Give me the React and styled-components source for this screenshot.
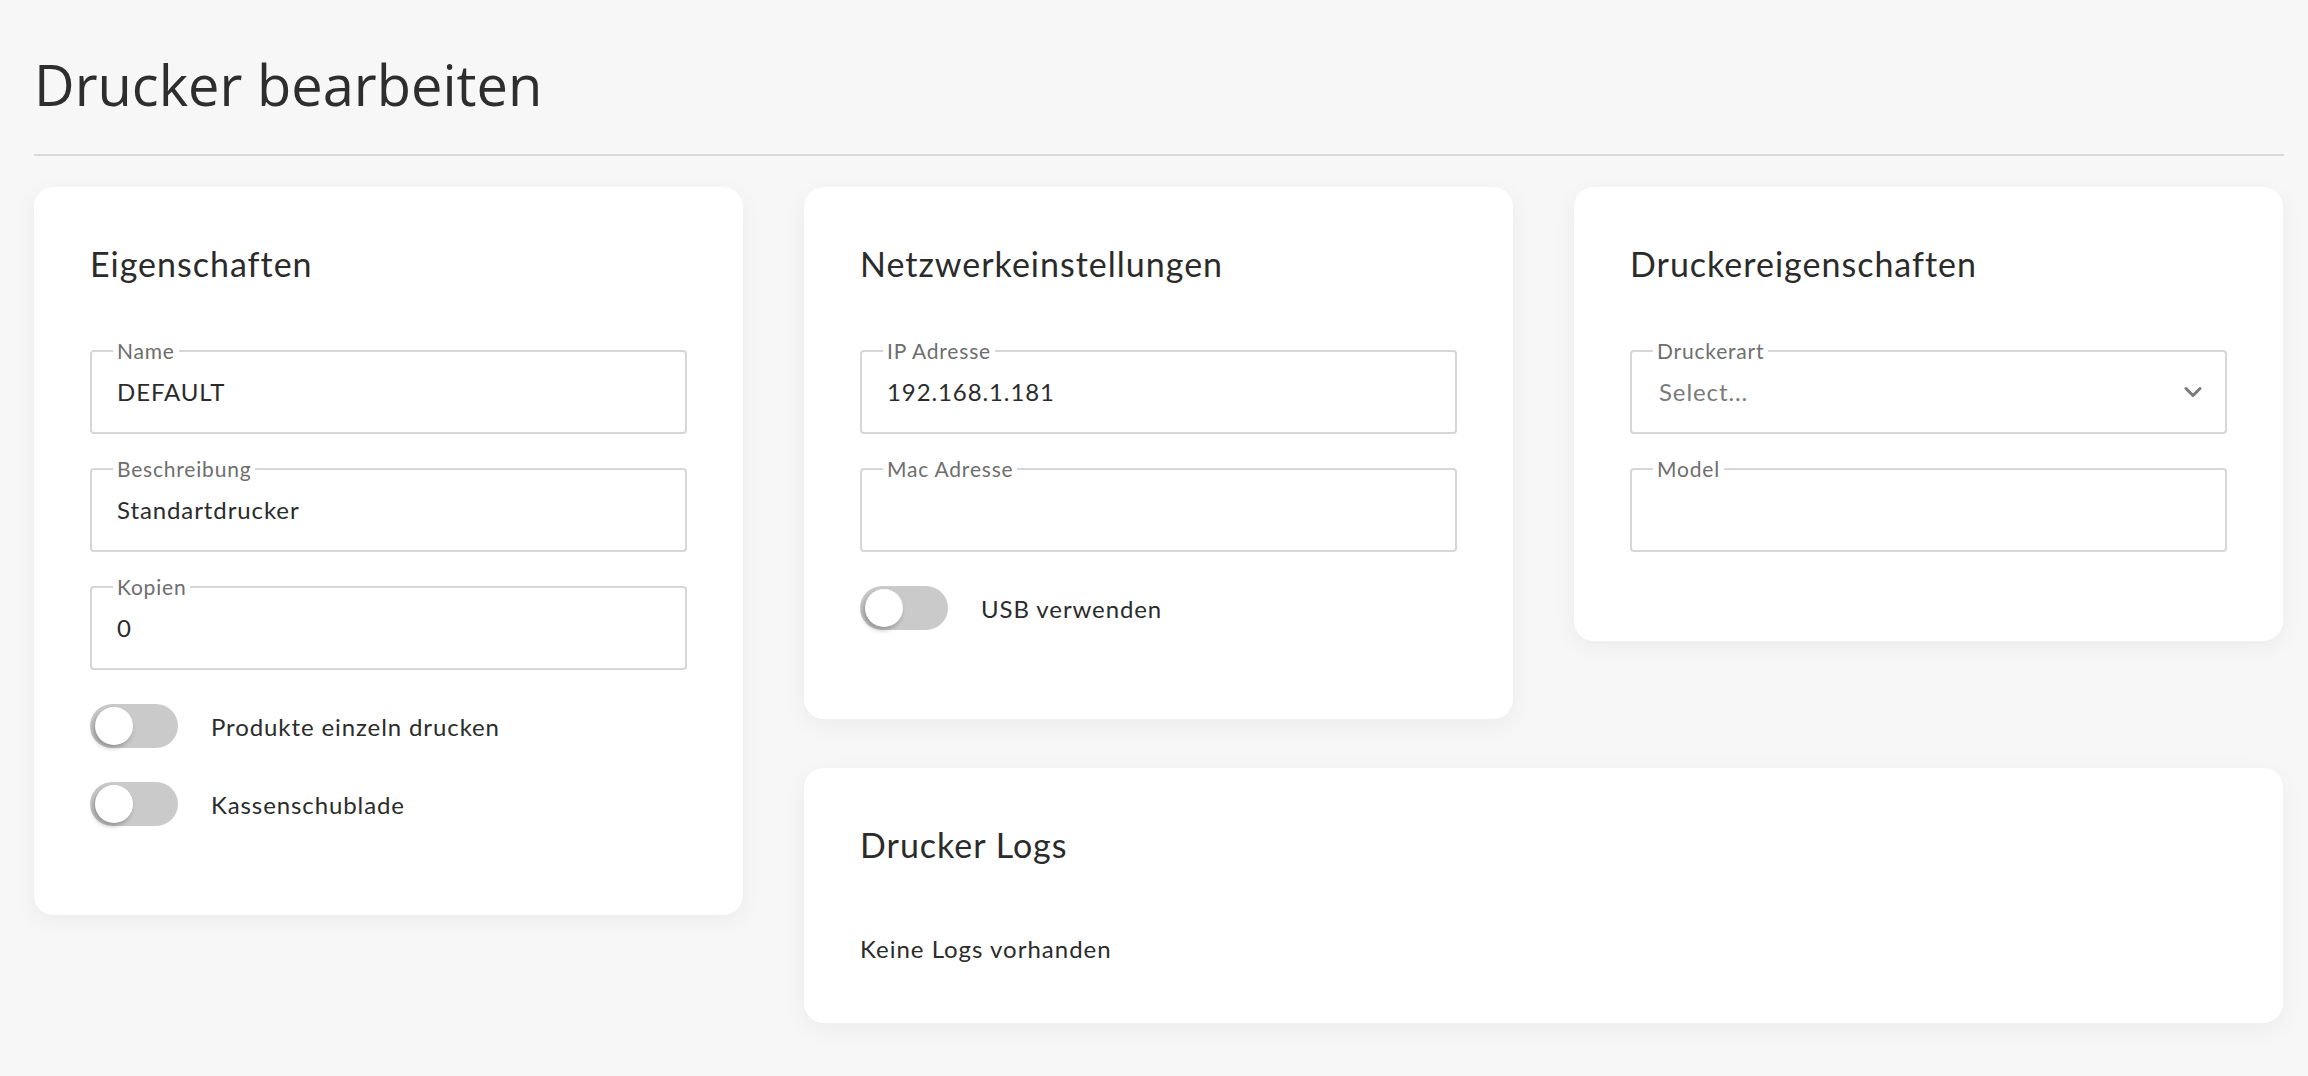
import React from 'react';
import styled, { createGlobalStyle } from 'styled-components';

const GlobalStyle = createGlobalStyle`
  html, body {
    margin: 0;
    padding: 0;
    background: #f7f7f7;
  }
  body {
    font-family: Lato, "Noto Sans", sans-serif;
    color: #2b2b2b;
  }
  * {
    box-sizing: border-box;
  }
`;

const Page = styled.div`
  padding: 49px 24px 40px 34px;
  min-height: 1076px;
`;

const Title = styled.h1`
  margin: 0;
  font-family: "Open Sans", sans-serif;
  font-weight: 400;
  font-size: 56px;
  line-height: 70px;
  color: #2e2e2e;
`;

const Divider = styled.hr`
  margin: 35px 0 0;
  border: 0;
  height: 2px;
  background: #d9d9d9;
`;

const Grid = styled.div`
  margin-top: 31px;
  display: grid;
  grid-template-columns: repeat(3, 709px);
  column-gap: 61px;
  row-gap: 49px;
  align-items: start;
`;

const Card = styled.section`
  background: #fff;
  border-radius: 20px;
  box-shadow: 0 6px 22px rgba(0, 0, 0, 0.05);
  padding: 56px 56px ${(p) => (p.$tight ? '56px' : '55px')};
  grid-column: ${(p) => p.$col || 'auto'};
  grid-row: ${(p) => p.$row || 'auto'};
`;

const CardTitle = styled.h2`
  margin: 0 0 66px;
  font-weight: 400;
  font-size: 34px;
  line-height: 41px;
  letter-spacing: 1px;
  color: #2b2b2b;
`;

const Field = styled.div`
  position: relative;
  height: 84px;
  margin-bottom: 34px;
  border: 2px solid #d6d6d6;
  border-radius: 4px;
  padding: 0 ${(p) => (p.$select ? '23px' : '25px')} 0 ${(p) => (p.$select ? '27px' : '25px')};
  display: flex;
  align-items: center;
  justify-content: space-between;
`;

const FieldLabel = styled.span`
  position: absolute;
  top: -14px;
  left: 21px;
  padding: 0 4px;
  background: #fff;
  font-size: 21px;
  line-height: 25px;
  letter-spacing: 0.8px;
  color: #6e6e6e;
`;

const FieldValue = styled.span`
  font-size: 24px;
  line-height: 30px;
  letter-spacing: 0.9px;
  color: ${(p) => (p.$placeholder ? '#7a7a7a' : '#2b2b2b')};
`;

const ToggleRow = styled.label`
  display: flex;
  align-items: center;
  height: 44px;
  margin-bottom: 34px;
  gap: 33px;
  font-size: 24px;
  letter-spacing: 0.9px;
  color: #2b2b2b;
`;

const Track = styled.span`
  position: relative;
  flex: none;
  width: 88px;
  height: 44px;
  border-radius: 22px;
  background: #cacaca;
`;

const Knob = styled.span`
  position: absolute;
  top: 3px;
  left: 5px;
  width: 38px;
  height: 38px;
  border-radius: 50%;
  background: #fff;
  box-shadow: -2px 3px 5px rgba(0, 0, 0, 0.28);
`;

const Text = styled.p`
  margin: 0;
  font-size: 24px;
  line-height: 36px;
  letter-spacing: 1px;
  color: #2b2b2b;
`;

const Chevron = () => (
  <svg width="18" height="12" viewBox="0 0 18 12" fill="none">
    <path d="M2 2.5l7 7 7-7" stroke="#7a7a7a" strokeWidth="3" strokeLinecap="round" strokeLinejoin="round" />
  </svg>
);

const Input = ({ label, value }) => (
  <Field>
    <FieldLabel>{label}</FieldLabel>
    <FieldValue>{value}</FieldValue>
  </Field>
);

const Select = ({ label, placeholder }) => (
  <Field $select>
    <FieldLabel>{label}</FieldLabel>
    <FieldValue $placeholder>{placeholder}</FieldValue>
    <Chevron />
  </Field>
);

const Toggle = ({ label }) => (
  <ToggleRow>
    <Track>
      <Knob />
    </Track>
    {label}
  </ToggleRow>
);

export default function App() {
  return (
    <>
      <GlobalStyle />
      <Page>
        <Title>Drucker bearbeiten</Title>
        <Divider />
        <Grid>
          <Card $col="1" $row="1 / span 2">
            <CardTitle>Eigenschaften</CardTitle>
            <Input label="Name" value="DEFAULT" />
            <Input label="Beschreibung" value="Standartdrucker" />
            <Input label="Kopien" value="0" />
            <Toggle label="Produkte einzeln drucken" />
            <Toggle label="Kassenschublade" />
          </Card>
          <Card $col="2" $row="1">
            <CardTitle>Netzwerkeinstellungen</CardTitle>
            <Input label="IP Adresse" value="192.168.1.181" />
            <Input label="Mac Adresse" value="" />
            <Toggle label="USB verwenden" />
          </Card>
          <Card $col="3" $row="1">
            <CardTitle>Druckereigenschaften</CardTitle>
            <Select label="Druckerart" placeholder="Select..." />
            <Input label="Model" value="" />
          </Card>
          <Card $col="2 / span 2" $row="2" $tight>
            <CardTitle>Drucker Logs</CardTitle>
            <Text>Keine Logs vorhanden</Text>
          </Card>
        </Grid>
      </Page>
    </>
  );
}
